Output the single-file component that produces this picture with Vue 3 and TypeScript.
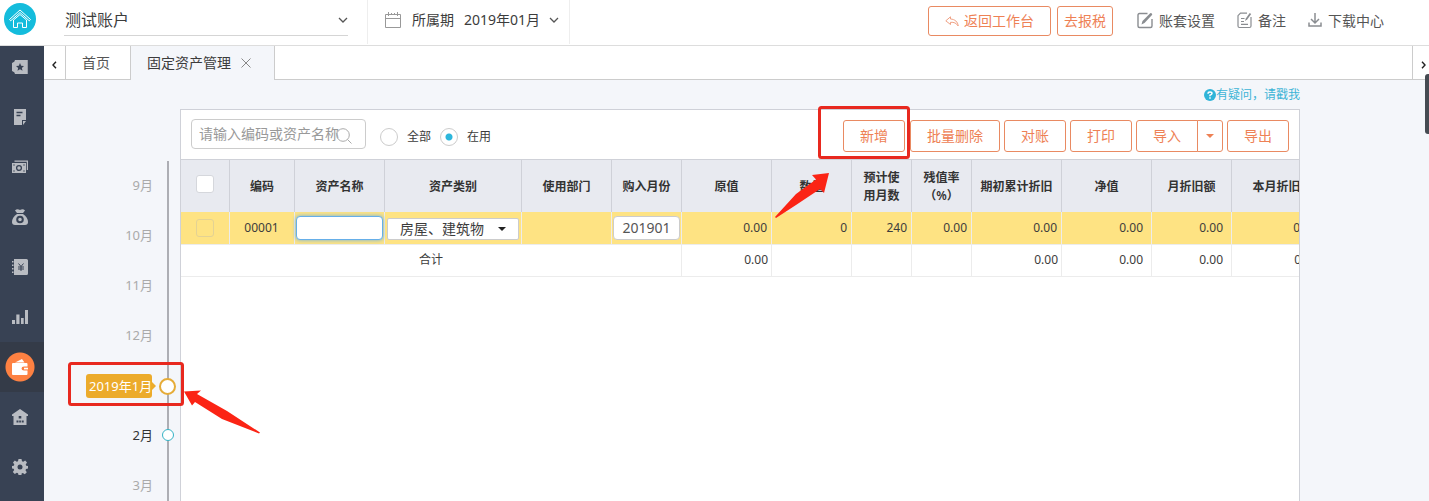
<script setup lang="ts">
import { ref } from 'vue'

interface Column { label: string; width: number; field?: string; total?: string; wide?: boolean }

const columns: Column[] = [
  { label: '编码', width: 65 },
  { label: '资产名称', width: 90 },
  { label: '资产类别', width: 137 },
  { label: '使用部门', width: 90 },
  { label: '购入月份', width: 70 },
  { label: '原值', width: 90, field: '0.00', total: '0.00' },
  { label: '数量', width: 80, field: '0', total: '' },
  { label: '预计使用月数', width: 60, field: '240', total: '' },
  { label: '残值率（%）', width: 60, field: '0.00', total: '' },
  { label: '期初累计折旧', width: 90, field: '0.00', total: '0.00' },
  { label: '净值', width: 90, field: '0.00', total: '0.00', wide: true },
  { label: '月折旧额', width: 80, field: '0.00', total: '0.00', wide: true },
  { label: '本月折旧', width: 90, field: '0.00', total: '0.00' },
]
const amounts = columns.slice(5)

const months = [
  { label: '9月', state: 'past' },
  { label: '10月', state: 'past' },
  { label: '11月', state: 'past' },
  { label: '12月', state: 'past' },
  { label: '2019年1月', state: 'current' },
  { label: '2月', state: 'open' },
  { label: '3月', state: 'past' },
]

const menu = ['ticket', 'note', 'cash', 'bag', 'book', 'chart', 'wallet', 'house', 'gear']
const menuNames = ['首页', '凭证', '资金', '工资', '账簿', '报表', '资产', '企业', '设置']
const status = ref('active')
const keyword = ref('')
const assetName = ref('')
const month = ref('201901')
</script>

<template>
  <div class="app">
    <header class="header">
      <a class="logo" href="#" aria-label="主页">
        <svg width="32" height="32" viewBox="0 0 32 32">
          <circle cx="16" cy="16" r="16" fill="#14bcdc" />
          <path d="M5.500 16.500 16 7l10.500 9.500-1.200 1.300L16 9.500l-9.300 8.300zM9.500 17v7.500h4v-4.500h5v4.500h4V17L16 11.500z" fill="none" stroke="#fff" stroke-width="1" stroke-linejoin="round" />
        </svg>
      </a>
      <div class="account">
        <select aria-label="账户"><option>测试账户</option></select>
        <svg class="caret" width="10" height="6" viewBox="0 0 10 6"><path d="M1 1l4 4 4-4" /></svg>
      </div>
      <div class="period">
        <svg width="16" height="16" viewBox="0 0 16 16" fill="none" stroke="#999">
          <path d="M.5 2.500h15v13H.5zM.5 6.500h15M3.500 0v4M6.500 1v2M9.500 1v2M12.500 0v4" />
        </svg>
        <label for="period">所属期</label>
        <select id="period"><option>2019年01月</option></select>
        <svg class="caret" width="10" height="6" viewBox="0 0 10 6"><path d="M1 1l4 4 4-4" /></svg>
      </div>
      <div class="actions">
        <button class="btn back">
          <svg width="14" height="11" viewBox="0 0 14 11" fill="none" stroke="#f0a184" stroke-linejoin="round"><path d="M5.500.8.8 4.800l4.700 3.700V6.300c3.500-.3 5.800.8 7.700 3.700C12.800 5.800 10 3.300 5.500 3z" /></svg>返回工作台</button>
        <button class="btn tax">去报税</button>
      </div>
      <nav class="links">
        <a href="#">
          <svg width="17" height="17" viewBox="0 0 17 17" fill="none" stroke="#8a8d91"><path d="M10.500 1.500h-8q-1.500 0-1.500 1.500v11q0 1.500 1.500 1.500h11q1.500 0 1.500-1.500V7" stroke-width="1.400" /><path d="M4.500 12.500l1-3.500L13.200 1.200q.8-.5 1.600.3t.2 1.500L7.500 11z" fill="#8a8d91" stroke="none" /></svg>账套设置</a>
        <a href="#">
          <svg width="15" height="17" viewBox="0 0 15 17" fill="none" stroke="#8a8d91" stroke-width="1.200"><path d="M10 1.200H3.500L1 3.700V14q0 1.500 1.500 1.500h10q1.500 0 1.500-1.500V5M4 6.500h3.500M4 9.500h3M4 12.300h7" /><path d="M8 9l.8-2.500L12.700 1l1.500 1-4 5.500z" fill="#8a8d91" stroke="none" /></svg>备注</a>
        <a href="#">
          <svg width="14" height="15" viewBox="0 0 14 15" fill="none" stroke="#8a8d91" stroke-width="1.500"><path d="M7 0v10M3 6l4 4 4-4M1 9.500V13h12V9.500" /></svg>下载中心</a>
      </nav>
    </header>

    <div class="body">
      <nav class="sidebar">
        <a v-for="(m, i) in menu" :key="m" href="#" :aria-label="menuNames[i]" :class="{ active: m === 'wallet' }">
          <svg width="16" height="16" viewBox="0 0 16 16">
            <template v-if="m === 'ticket'">
              <path d="M3 1h13l-.5 1 .5 1-.5 1 .5 1-.5 1 .5 1-.5 1 .5 1-.5 1 .5 1-.5 1 .5 1-.5 1 .5 1H3q0-2-3-3V4q3-1 3-3z" /><path class="cut" d="M8 4l1.200 2.700 2.800.3-2.100 1.900.6 2.900L8 10.300l-2.500 1.500.6-2.900L4 7l2.800-.3z" />
            </template>
            <template v-else-if="m === 'note'">
              <path d="M2 0h12v11h-4v5H2z" /><path d="M11 12h3l-3 4z" /><path class="line" d="M4.500 3.500h6M4.500 6.500h4" />
            </template>
            <template v-else-if="m === 'cash'">
              <path d="M2.500 1.500H16V11h-1.200V2.700H2.500z" /><path d="M0 4h14v10H0z" /><circle class="line" cx="7" cy="9" r="2.400" /><path class="line" d="M1.500 6h1M11.500 6h1M1.500 12h1M11.500 12h1" />
            </template>
            <template v-else-if="m === 'bag'">
              <path d="M3 1.500Q5-.5 8 1q3-1.500 5 .5L11 4H5z" /><path d="M5 5h6q5 3.500 5 8 0 3-3 3H3q-3 0-3-3 0-4.500 5-8z" /><circle class="line thick" cx="8" cy="10.500" r="2.800" />
            </template>
            <template v-else-if="m === 'book'">
              <path d="M2 0h12.500q1.500 0 1.500 1.500v13q0 1.500-1.500 1.500H2zM0 2h1.500v1.500H0zM0 5.500h1.500V7H0zM0 9h1.500v1.500H0zM0 12.500h1.500V14H0z" /><path class="line thin" d="M6.500 4.500 9 7.500l2.500-3M6 8h6M6 10h6M9 7.500v4.500" />
            </template>
            <template v-else-if="m === 'chart'">
              <path d="M0 11h3v4H0zM4.300 5.500h3.200V15H4.300zM9 9h2.700v6H9zM13 1h3v14h-3z" />
            </template>
            <template v-else-if="m === 'wallet'">
              <path d="M3 3.500 10 0l2.500 3.500z" /><path d="M1 4h13.500q1 0 1 1v2.500H12q-2.500 0-2.500 2t2.500 2h3.500V15q0 1-1 1H1q-1 0-1-1V5q0-1 1-1z" /><path d="M12 8.700h4v1.700h-4z" />
            </template>
            <template v-else-if="m === 'house'">
              <path d="M8 0l8 5.500V7h-1.500v9h-13V7H0V5.500z" /><path class="cut" d="M6.700 7h2.600v2.500H6.700zM4.500 11.500h2v2h-2zM7.200 11.500h1.700v2H7.200zM9.700 11.500h2v2h-2z" />
            </template>
            <template v-else>
              <path d="M6.500 0h3l.5 2.300 1.200.5L13.200 1.500l1.800 2-1.300 2 .5 1.200 1.800.3v2.500l-2 .5-.5 1.200 1.300 2-2 2-2-1.300-1.200.5L9.500 16h-3L6 14.200l-1.200-.5-2 1.300-2-2 1.400-2-.5-1.200-1.700-.3V7l1.800-.3.5-1.200-1.300-2 1.800-2 2 1.300L6 2.300z" /><circle class="cut" cx="8" cy="8" r="2.500" />
            </template>
          </svg>
        </a>
      </nav>

      <main class="main">
        <div class="tabs">
          <button class="scroll" aria-label="向左"><svg width="5" height="8" viewBox="0 0 5 8"><path d="M4 .8 1 4l3 3.200" /></svg></button>
          <a class="tab" href="#">首页</a>
          <div class="tab on">
            <a href="#">固定资产管理</a>
            <button aria-label="关闭"><svg width="10" height="10" viewBox="0 0 10 10"><path d="M.5.5l9 9M9.500.5l-9 9" stroke="#888" /></svg></button>
          </div>
          <div class="rest"></div>
          <button class="scroll right" aria-label="向右"><svg width="5" height="8" viewBox="0 0 5 8"><path d="M1 .8 4 4 1 7.200" /></svg></button>
        </div>

        <div class="content">
          <ol class="timeline">
            <li v-for="m in months" :key="m.label" :class="m.state">
              <a href="#">{{ m.label }}</a>
              <span class="mark"><i></i></span>
              <svg v-if="m.state === 'current'" class="callout" width="194" height="80" viewBox="0 0 194 80">
                <rect x="2.500" y="3.500" width="113" height="41" rx="2" fill="none" stroke="#e8291f" stroke-width="3" />
                <path d="M117 31.500 134 30.500 130 34 160 51 193 72.500 192 73.500 155 59 128 42 125 45.500z" fill="#fb2415" />
              </svg>
            </li>
          </ol>

          <div class="work">
            <a class="help" href="#">
              <svg width="12" height="12" viewBox="0 0 12 12"><circle cx="6" cy="6" r="6" fill="#2fb4d8" /><path d="M4 4.700Q4 3 6 3t2 1.500Q8 5.500 6 6.200V7.200M6 8.200v1.500" fill="none" stroke="#fff" stroke-width="1.500" /></svg>有疑问，请戳我</a>
            <section class="panel">
              <div class="toolbar">
                <div class="search">
                  <input v-model="keyword" type="text" aria-label="搜索" placeholder="请输入编码或资产名称">
                  <svg width="16" height="16" viewBox="0 0 16 16" fill="none" stroke="#aaa"><circle cx="7" cy="7" r="6.300" /><path d="M11.500 11.500l4 4" /></svg>
                </div>
                <label class="radio"><input v-model="status" type="radio" name="status" value="all">全部</label>
                <label class="radio"><input v-model="status" type="radio" name="status" value="active">在用</label>
                <div class="buttons">
                  <div class="add">
                    <button class="btn">新增</button>
                    <svg class="callout" width="142" height="120" viewBox="0 0 142 120">
                      <rect x="45.500" y="5.500" width="89" height="50" rx="2" fill="none" stroke="#e8291f" stroke-width="3" />
                      <path d="M55 71 38 73 42 77.500 22 92 1 115 2 116 22 103 46 87 50 91z" fill="#fb2415" />
                    </svg>
                  </div>
                  <button class="btn">批量删除</button>
                  <button class="btn">对账</button>
                  <button class="btn">打印</button>
                  <div class="split">
                    <button class="btn">导入</button>
                    <button class="btn more" aria-label="更多导入"><svg width="8" height="4" viewBox="0 0 8 4"><path d="M0 0h8L4 4z" fill="#ee8155" /></svg></button>
                  </div>
                  <button class="btn">导出</button>
                </div>
              </div>
              <div class="scroller">
                <table>
                  <colgroup>
                    <col class="pick">
                    <col v-for="c in columns" :key="c.label" :style="{ width: c.width + 'px' }">
                  </colgroup>
                  <thead>
                    <tr>
                      <th><input type="checkbox" aria-label="全选"></th>
                      <th v-for="c in columns" :key="c.label">{{ c.label }}</th>
                    </tr>
                  </thead>
                  <tbody>
                    <tr class="selected">
                      <td class="mid"><input type="checkbox" aria-label="选择 00001"></td>
                      <td class="mid">00001</td>
                      <td class="edit"><input v-model="assetName" class="name" type="text" aria-label="资产名称"></td>
                      <td class="edit">
                        <div class="kind">
                          <select aria-label="资产类别"><option>房屋、建筑物</option></select>
                          <svg width="8" height="4" viewBox="0 0 8 4"><path d="M0 0h8L4 4z" fill="#222" /></svg>
                        </div>
                      </td>
                      <td></td>
                      <td class="edit"><input v-model="month" class="month" type="text" aria-label="购入月份"></td>
                      <td v-for="c in amounts" :key="c.label" :class="{ wide: c.wide }">{{ c.field }}</td>
                    </tr>
                    <tr>
                      <td class="mid" colspan="6">合计</td>
                      <td v-for="c in amounts" :key="c.label" :class="{ wide: c.wide }">{{ c.total }}</td>
                    </tr>
                  </tbody>
                </table>
              </div>
            </section>
          </div>
        </div>
        <div class="thumb"></div>
      </main>
    </div>
  </div>
</template>

<style>
html, body { background: #f4f6fa; }
</style>

<style scoped>
* { box-sizing: border-box; }
.app { height: 100vh; display: flex; flex-direction: column; overflow: hidden; font: 14px/20px "Noto Sans", "Noto Sans CJK SC", sans-serif; color: #3c3c3c; text-spacing-trim: space-all; }
a { color: inherit; text-decoration: none; }
svg { display: block; flex: none; }
button, input, select { font: inherit; color: inherit; margin: 0; padding: 0; border: 0; background: none; outline: none; }
select { appearance: none; }
button { cursor: pointer; }
.btn { height: 32px; padding: 0 16px; border: 1px solid #e98a62; border-radius: 3px; background: #fff; color: #ee8155; white-space: nowrap; }

.header { flex: none; height: 46px; display: flex; background: #fff; border-bottom: 1px solid #ddd; }
.logo { margin: 3px 28px 0 4px; }
.account { width: 284px; height: 36px; display: flex; align-items: center; border-bottom: 1px solid #d5d5d5; margin-right: 19px; padding: 4px 0 0 1px; }
.account select { flex: 1; font-size: 16px; line-height: 24px; }
.caret { fill: none; stroke: #555; stroke-width: 1.3; pointer-events: none; }
.period { display: flex; align-items: center; height: 44px; width: 203px; padding: 0 10px 4px 17px; border: solid #eee; border-width: 0 1px; }
.period label { margin: 0 10px 0 11px; white-space: nowrap; }
.period select { flex: 1; min-width: 0; }
.actions { margin: 6px 0 0 auto; display: flex; gap: 6px; }
.actions .btn { height: 30px; }
.back { display: flex; align-items: center; gap: 5px; }
.actions .tax { padding: 0 6px; }
.links { display: flex; gap: 22px; margin: 0 45px 4px 24px; align-items: center; color: #555; }
.links a { display: flex; align-items: center; gap: 6px; white-space: nowrap; }
.links a:first-child { gap: 5px; }

.body { flex: 1; min-height: 0; display: flex; }
.sidebar { flex: none; width: 44px; background: #384254; display: flex; flex-direction: column; gap: 8px; }
.sidebar a { flex: none; height: 42px; display: flex; align-items: center; padding-left: 12px; }
.sidebar svg { fill: #b9bcc2; }
.cut { fill: #384254; }
.line { fill: none; stroke: #384254; stroke-width: 1.3; }
.thick { stroke-width: 2; }
.thin { stroke-width: 1; }
.sidebar .active { background: radial-gradient(circle at 20px 50%, #fd8142 14px, #343b48 15px); box-shadow: 0 0 0 4px #343b48; clip-path: inset(-4px 0); }
.sidebar .active svg { fill: #fff; }

.main { flex: 1; min-width: 0; position: relative; display: flex; flex-direction: column; background: #f4f6fa; }
.tabs { flex: none; height: 34px; display: flex; }
.tabs > * { border-bottom: 1px solid #ccc; background: #fff; }
.scroll { width: 21px; display: flex; align-items: center; justify-content: center; padding-top: 4px; }
.scroll svg { fill: none; stroke: #222; stroke-width: 1.4; }
.right { width: 17px; border-left: 1px solid #ccc; padding-left: 5px; }
.tab { display: flex; align-items: center; padding: 0 20px 0 16px; border-left: 1px solid #ccc; color: #555; }
.tab.on { background: #f4f6fa; border: solid #ccc; border-width: 0 1px; padding: 0 23px 0 16px; gap: 10px; color: #3c3c3c; }
.rest { flex: 1; }
.thumb { position: absolute; right: 0; top: 28px; width: 4px; height: 60px; border-radius: 3px 0 0 3px; background: #454b52; }

.content { flex: 1; min-height: 0; display: flex; padding-right: 129px; }
.timeline { position: relative; flex: none; width: 136px; margin: 81px 0 0; padding: 0; list-style: none; font-size: 13px; color: #aaa; }
.timeline::before { content: ""; position: absolute; left: 123px; top: 0; bottom: 0; width: 2px; background: #adaeb4; }
.timeline li { position: relative; height: 50px; display: flex; align-items: center; justify-content: flex-end; }
.timeline li > a { margin-right: 3px; padding-bottom: 2px; white-space: nowrap; }
.mark { width: 24px; display: flex; justify-content: center; z-index: 1; }
.mark i { border-radius: 50%; background: #fff; }
.timeline .open { color: #333; }
.open .mark { padding-bottom: 2px; }
.open i { width: 12px; height: 12px; border: 1px solid #35b3c6; }
.current .mark { width: 25px; }
.current i { width: 17px; height: 17px; border: 2px solid #e6ac38; }
.timeline .current > a { position: relative; width: 66px; height: 24px; line-height: 24px; padding: 0 0 0 3px; border-radius: 3px; background: #ecab2b; color: #fff; }
.current > a::after { content: ""; position: absolute; left: 66px; top: 8px; border: 4px solid transparent; border-left-color: #ecab2b; border-right: 0; }
.callout { position: absolute; z-index: 3; pointer-events: none; }
.current .callout { left: 23px; top: -1px; }
.add .callout { left: -69px; top: -18px; }

.work { flex: 1; min-width: 0; display: flex; flex-direction: column; }
.help { height: 29px; display: flex; align-items: center; justify-content: flex-end; font-size: 12px; color: #3cb4d6; }
.panel { flex: 1; min-height: 0; border: 1px solid #cfd1d8; border-bottom: 0; background: #fff; }
.toolbar { height: 49px; display: flex; align-items: flex-start; padding: 10px 10px 0; }
.search { flex: none; display: flex; align-items: center; width: 175px; height: 30px; margin: -1px 14px 0 0; padding: 0 13px 0 7px; border: 1px solid #ccc; border-radius: 4px; }
.search input { flex: 1; min-width: 0; margin-right: -4px; }
.search svg { margin-top: 3px; }
.search input::placeholder { color: #999; opacity: 1; }
.radio { display: flex; align-items: center; gap: 9px; margin: 7px 9px 0 0; font-size: 12px; white-space: nowrap; }
.radio input { appearance: none; width: 18px; height: 18px; border: 1px solid #ccc; border-radius: 50%; background: #fff; }
.radio input:checked { background: radial-gradient(circle, #2db7dc 3px, #fff 4px); }
.buttons { display: flex; gap: 4px; margin-left: auto; }
.add { position: relative; margin-right: 1px; }
.split { display: flex; }
.split .btn:first-child { border-radius: 3px 0 0 3px; }
.split .more { width: 26px; padding: 0 8px; margin-left: -1px; border-radius: 0 3px 3px 0; }

.scroller { overflow: hidden; }
table { width: 1141px; table-layout: fixed; border-collapse: separate; border-spacing: 0; font-size: 12px; line-height: 18px; }
.pick { width: 49px; }
th { height: 53px; padding: 2px 8px 0; border: solid #cfd1d8; border-width: 1px 1px 0 0; background: #e8eaf0; font-weight: 600; color: #333; }
td { height: 32px; padding: 0 3px 2px; border: solid #ececec; border-width: 0 1px 1px 0; text-align: right; }
.selected td { height: 33px; background: #fee383; padding: 0 4px 0 3px; }
td.wide, .selected td.wide { padding-right: 8px; }
td.mid { text-align: center; }
.selected td.edit { padding: 0 1px; }
th input, td input[type="checkbox"] { display: block; margin: -6px auto 0; appearance: none; width: 18px; height: 18px; border: 1px solid #d5d7dc; border-radius: 3px; background: #fff; }
td input[type="checkbox"] { margin-top: 0; background: none; border-color: #e3d294; }
.edit input { display: block; width: 100%; height: 24px; margin-top: -1px; border: 1px solid #ccc; border-radius: 4px; background: #fff; font-size: 14px; text-align: center; color: #555; }
.edit .name { border-color: #66afe9; box-shadow: 0 0 4px #66afe9; }
.kind { display: flex; align-items: center; height: 22px; margin: 2px 1px 0; padding: 0 12px; border: 1px solid #ccc; border-radius: 2px; background: #fff; }
.kind select { flex: 1; font-size: 14px; }
</style>
